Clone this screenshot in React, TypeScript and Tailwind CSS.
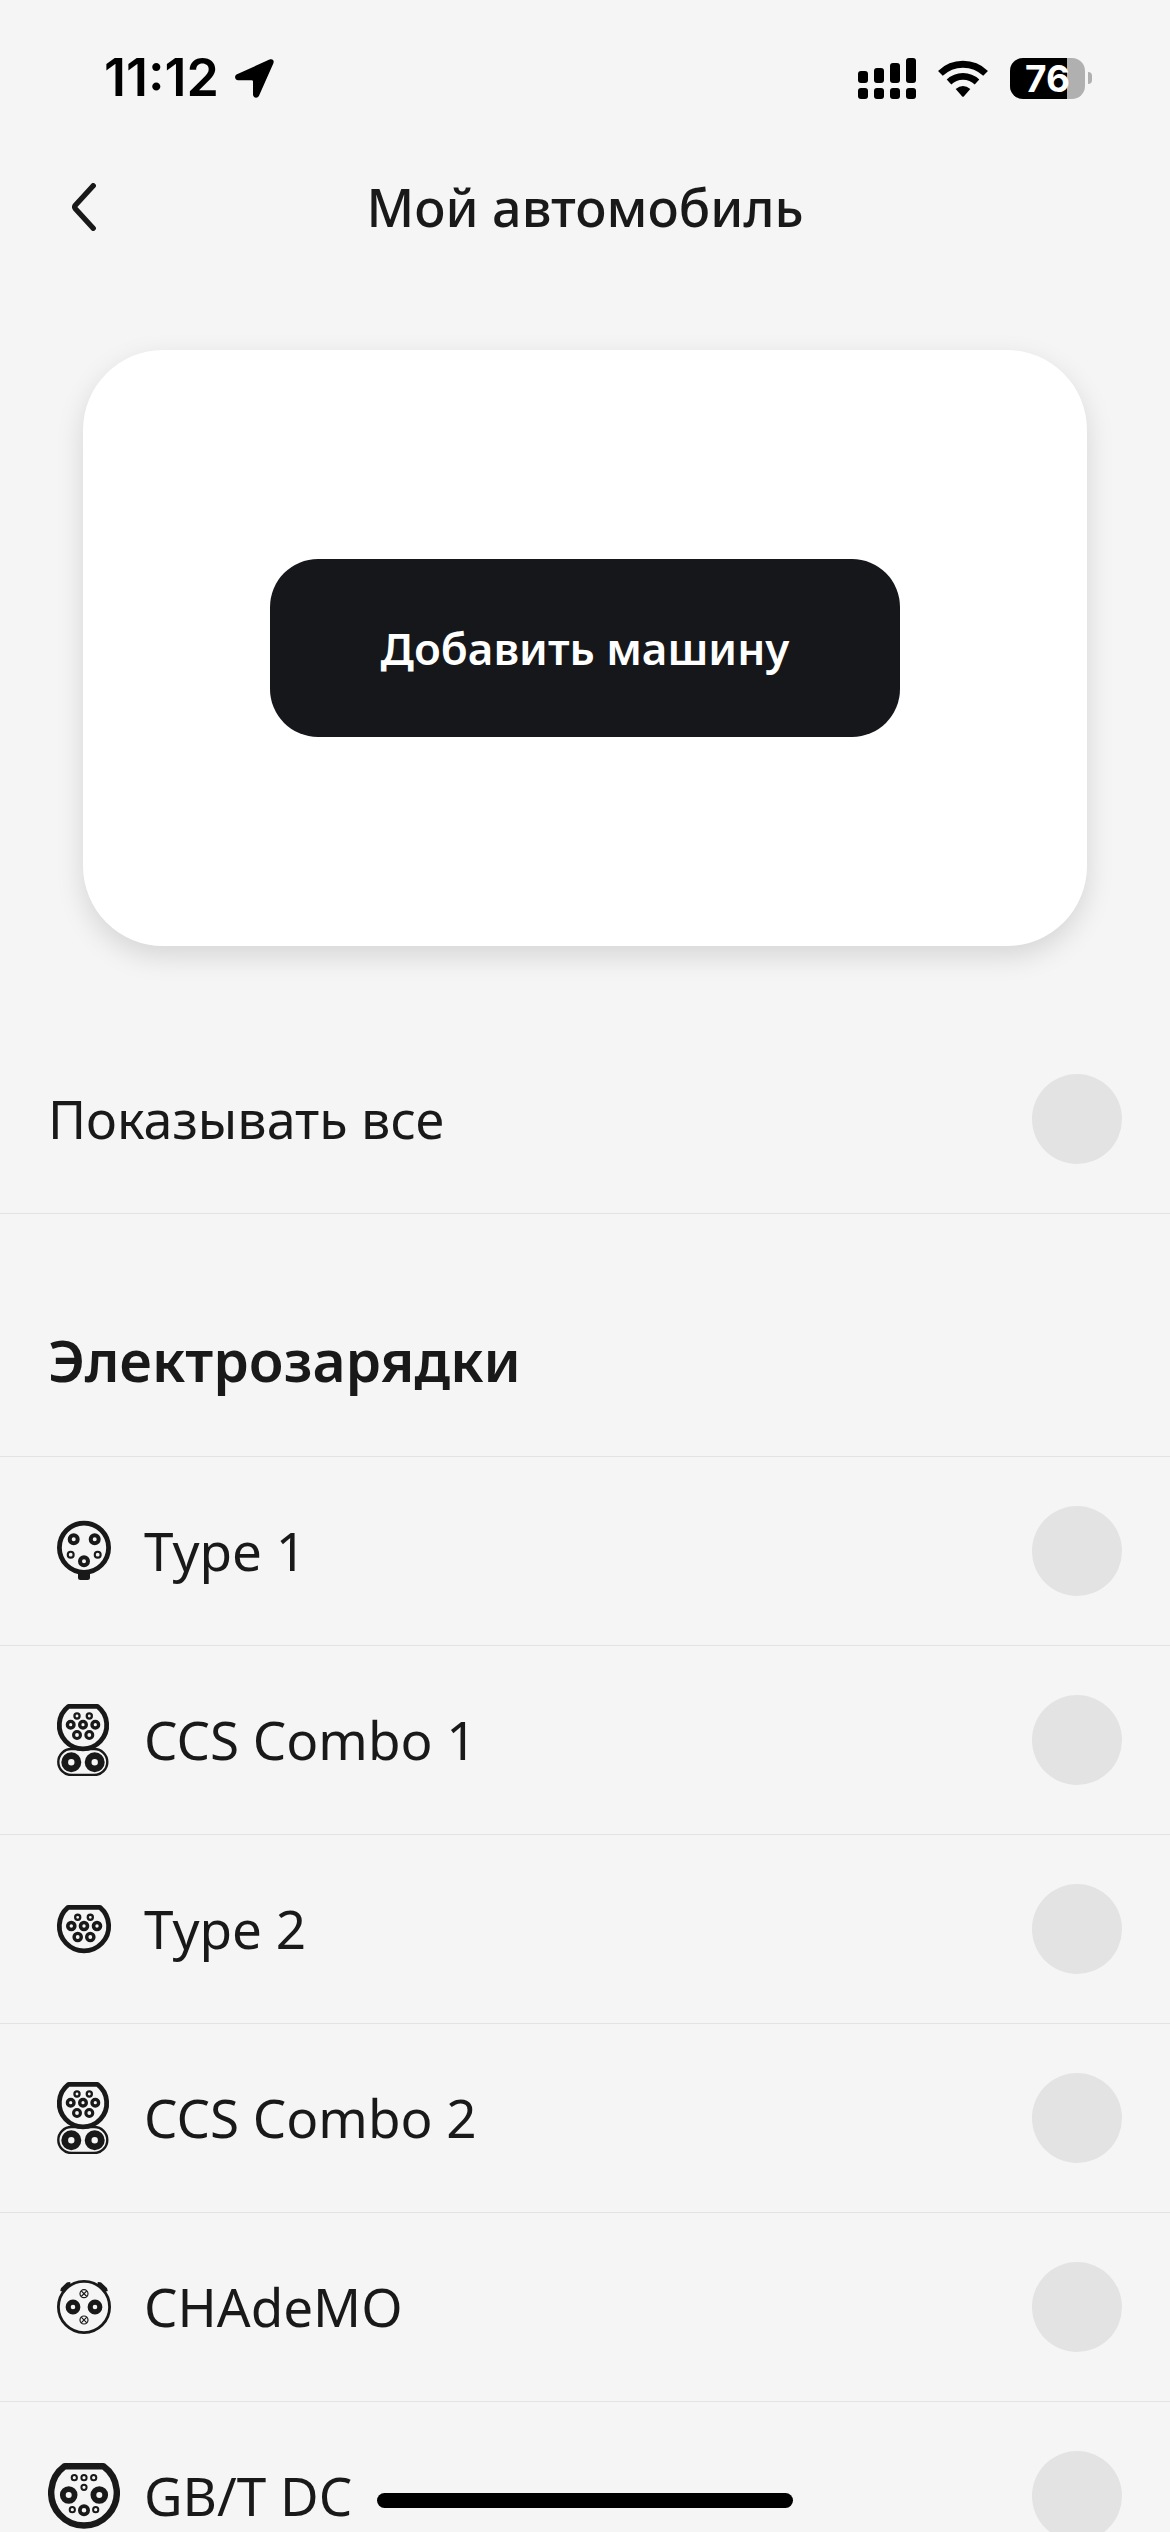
import React, { useState } from 'react';

type Pin = [cx: number, cy: number, radius: number, hole: number];

const INK = '#191919';

const ccsPins: Pin[] = [
  [29, 12, 3.7, 1.4],
  [41.3, 12, 3.7, 1.4],
  [22.7, 20.7, 5, 1.6],
  [35, 20.7, 5, 1.6],
  [47.3, 20.7, 5, 1.6],
  [29, 31, 5, 1.9],
  [41.3, 31, 5, 1.9],
];

const Pins = ({ pins }: { pins: Pin[] }) => (
  <g fill="none" stroke={INK}>
    {pins.map(([cx, cy, radius, hole]) => (
      <circle key={`${cx}-${cy}`} cx={cx} cy={cy} r={(radius + hole) / 2} strokeWidth={radius - hole} />
    ))}
  </g>
);

const PlugSvg = ({ children }: { children: React.ReactNode }) => (
  <svg viewBox="0 0 72 72" className="size-18 shrink-0" fill="none" aria-hidden="true">
    {children}
  </svg>
);

const Type1Icon = () => (
  <PlugSvg>
    <circle cx="36" cy="32.7" r="24.6" stroke={INK} strokeWidth="4.8" />
    <path d="M30 56h12v6.5a2.500 2.500 0 0 1-2.500 2.500h-7a2.500 2.500 0 0 1-2.500-2.500z" fill={INK} />
    <Pins
      pins={[
        [25.7, 24.3, 6, 2],
        [46.7, 24.3, 6, 2],
        [22.7, 39.7, 4, 1.9],
        [49.7, 39.7, 4, 1.9],
        [36, 46.3, 6, 2],
      ]}
    />
  </PlugSvg>
);

const CcsIcon = () => (
  <PlugSvg>
    <rect x="10.3" y="45" width="49" height="26" rx="13" stroke={INK} strokeWidth="2.4" />
    <path
      d="M20.5 2.4H49.5A23.7 23.7 0 1 1 20.5 2.4Z"
      fill="#f5f5f5"
      stroke={INK}
      strokeWidth="4.8"
      strokeLinejoin="round"
    />
    <Pins pins={[...ccsPins, [23.3, 58.3, 10, 3.2], [46.7, 58.3, 10, 3.2]]} />
  </PlugSvg>
);

const Type2Icon = () => (
  <PlugSvg>
    <path d="M20 14.4H52A24.7 24.7 0 1 1 20 14.4Z" stroke={INK} strokeWidth="4.8" strokeLinejoin="round" />
    <Pins
      pins={[
        [29.7, 24.3, 3.7, 1.4],
        [42.3, 24.3, 3.7, 1.4],
        [23.3, 33, 5.3, 1.7],
        [36, 33, 5.3, 1.7],
        [49, 33, 5.3, 1.7],
        [29.7, 44, 5.3, 1.9],
        [42.3, 44, 5.3, 1.9],
      ]}
    />
  </PlugSvg>
);

const ChademoIcon = () => (
  <PlugSvg>
    <circle cx="36" cy="36" r="25.6" stroke={INK} strokeWidth="2.8" />
    <path d="M14 20.5l.6-2.5 5.2-5 2.6-.2M58 20.5l-.6-2.5-5.2-5-2.6-.2" stroke={INK} strokeWidth="3.6" strokeLinejoin="round" />
    <g stroke={INK} strokeWidth="1.2">
      <circle cx="36" cy="22.7" r="4" />
      <path d="M33.2 19.9l5.6 5.6M38.8 19.9l-5.6 5.6" />
      <circle cx="36" cy="49" r="4" />
      <path d="M33.2 46.2l5.6 5.6M38.8 46.2l-5.6 5.6" />
    </g>
    <Pins
      pins={[
        [25, 36, 7.4, 2.3],
        [47, 36, 7.4, 2.3],
      ]}
    />
  </PlugSvg>
);

const GbtIcon = () => (
  <PlugSvg>
    <path d="M16.7 6.2H55.3A32.8 32.8 0 1 1 16.7 6.2Z" stroke={INK} strokeWidth="6.4" strokeLinejoin="round" />
    <Pins
      pins={[
        [26.3, 17.7, 3.6, 1.6],
        [36, 17.7, 3.6, 1.6],
        [45.7, 17.7, 3.6, 1.6],
        [36, 27.3, 3.6, 1.6],
        [20.7, 35, 8.8, 3],
        [51.3, 35, 8.8, 3],
        [24.3, 49.7, 3.6, 1.6],
        [47.7, 49.7, 3.6, 1.6],
        [36, 50.3, 6, 2.3],
      ]}
    />
  </PlugSvg>
);

const connectors: { id: string; label: string; icon: React.FC }[] = [
  { id: 'type1', label: 'Type 1', icon: Type1Icon },
  { id: 'ccs1', label: 'CCS Combo 1', icon: CcsIcon },
  { id: 'type2', label: 'Type 2', icon: Type2Icon },
  { id: 'ccs2', label: 'CCS Combo 2', icon: CcsIcon },
  { id: 'chademo', label: 'CHAdeMO', icon: ChademoIcon },
  { id: 'gbt', label: 'GB/T DC', icon: GbtIcon },
];

const StatusBar = () => (
  <div className="flex h-[156px] shrink-0 items-center justify-between pl-[104px] pr-[78px] font-['Inter',sans-serif] text-black">
    <div className="flex items-center gap-4">
      <span className="text-[52px] leading-none font-semibold">11:12</span>
      <svg viewBox="0 0 39 39" className="size-[39px]" aria-hidden="true">
        <path
          d="M34.5 .6C37.5-.7 39.6 1.4 38.3 4.4L24 36.8C22.7 39.7 18 39.2 18 35.5V22.5Q18 21.2 16.7 21.2H3.2C-.4 21.2-1 16.7 2 15.3Z"
          fill="currentColor"
        />
      </svg>
    </div>
    <div className="flex items-center gap-[22px]">
      <svg viewBox="0 0 58 41" className="h-[41px] w-[58px]" fill="currentColor" aria-hidden="true">
        <rect x="0" y="13" width="10" height="12" rx="3" />
        <rect x="16" y="10" width="10" height="15" rx="3" />
        <rect x="32" y="5" width="10" height="20" rx="3" />
        <rect x="48" y="0" width="10" height="25" rx="3" />
        <rect x="0" y="30" width="10" height="11" rx="3" />
        <rect x="16" y="30" width="10" height="11" rx="3" />
        <rect x="32" y="30" width="10" height="11" rx="3" />
        <rect x="48" y="30" width="10" height="11" rx="3" />
      </svg>
      <svg viewBox="0 0 50 37" className="h-[37px] w-[50px]" fill="none" aria-hidden="true">
        <path d="M2.4 13.4A32.5 32.5 0 0 1 47.6 13.4" stroke="currentColor" strokeWidth="6.8" />
        <path d="M11 22A20.3 20.3 0 0 1 39 22" stroke="currentColor" strokeWidth="6.6" />
        <path d="M17.7 29Q25 22.8 32.3 29L26 36.2Q25 37.2 24 36.2Z" fill="currentColor" />
      </svg>
      <div className="flex items-center gap-[3px]">
        <div className="relative flex h-[41px] w-[75px] items-center justify-center rounded-[13px] bg-[#b0b0b0]">
          <div className="absolute inset-y-0 left-0 w-[57px] rounded-l-[13px] bg-black" />
          <span className="relative text-[37px] leading-none font-bold text-white">76</span>
        </div>
        <div className="h-3 w-[4px] rounded-r-full bg-[#b0b0b0]" />
      </div>
    </div>
  </div>
);

interface ToggleRowProps {
  label: string;
  icon?: React.FC;
  checked: boolean;
  onChange: () => void;
}

const ToggleRow: React.FC<ToggleRowProps> = ({ label, icon: Icon, checked, onChange }) => (
  <label className="flex h-[189px] shrink-0 items-center gap-6 border-b border-[#e3e3e3] px-12">
    {Icon && <Icon />}
    <span className={`flex-1 leading-[64px] ${Icon ? 'text-[53px]' : 'text-[52px]'}`}>{label}</span>
    <input
      type="checkbox"
      checked={checked}
      onChange={onChange}
      className="size-[90px] appearance-none rounded-full bg-[#e3e3e3] checked:bg-[#15171a]"
    />
  </label>
);

export default function App() {
  const [selected, setSelected] = useState<string[]>([]);
  const allSelected = selected.length === connectors.length;

  const toggle = (id: string) =>
    setSelected(prev => (prev.includes(id) ? prev.filter(x => x !== id) : [...prev, id]));

  return (
    <div className="relative flex h-screen flex-col overflow-hidden bg-[#f5f5f5] font-['Noto_Sans',sans-serif] text-[#191919]">
      <StatusBar />

      <header className="grid h-[102px] shrink-0 grid-cols-[72px_1fr_72px] items-center px-12">
        <button type="button" aria-label="Назад" className="flex h-18 items-center justify-center">
          <svg viewBox="0 0 24 48" className="h-12 w-6" fill="none" aria-hidden="true">
            <path
              d="M21.2 2.8L3.4 22.3Q2 24 3.4 25.7L21.2 45.2"
              stroke="currentColor"
              strokeWidth="5.4"
              strokeLinecap="round"
            />
          </svg>
        </button>
        <h1 className="text-center text-[52px] leading-[64px] font-medium">Мой автомобиль</h1>
      </header>

      <main className="flex min-h-0 flex-1 flex-col overflow-hidden">
        {/* Car card */}
        <section className="mx-[83px] mt-[92px] flex h-[596px] shrink-0 items-center justify-center rounded-[80px] bg-white shadow-[0_10px_28px_rgba(0,0,0,0.13)]">
          <button
            type="button"
            className="h-[178px] rounded-[48px] bg-[#15171a] px-[111px] text-[44px] leading-[64px] font-semibold text-white"
          >
            Добавить машину
          </button>
        </section>

        <div className="mt-[79px] flex shrink-0 flex-col">
          <ToggleRow
            label="Показывать все"
            checked={allSelected}
            onChange={() => setSelected(allSelected ? [] : connectors.map(c => c.id))}
          />
        </div>

        {/* Connectors */}
        <h2 className="flex h-[243px] shrink-0 items-end border-b border-[#e3e3e3] px-12 pb-[58px] text-[57px] leading-[76px] font-semibold">
          Электрозарядки
        </h2>
        {connectors.map(item => (
          <ToggleRow
            key={item.id}
            label={item.label}
            icon={item.icon}
            checked={selected.includes(item.id)}
            onChange={() => toggle(item.id)}
          />
        ))}
      </main>

      {/* Home indicator */}
      <div className="absolute bottom-6 left-1/2 h-[15px] w-[416px] -translate-x-1/2 rounded-full bg-black" />
    </div>
  );
}
